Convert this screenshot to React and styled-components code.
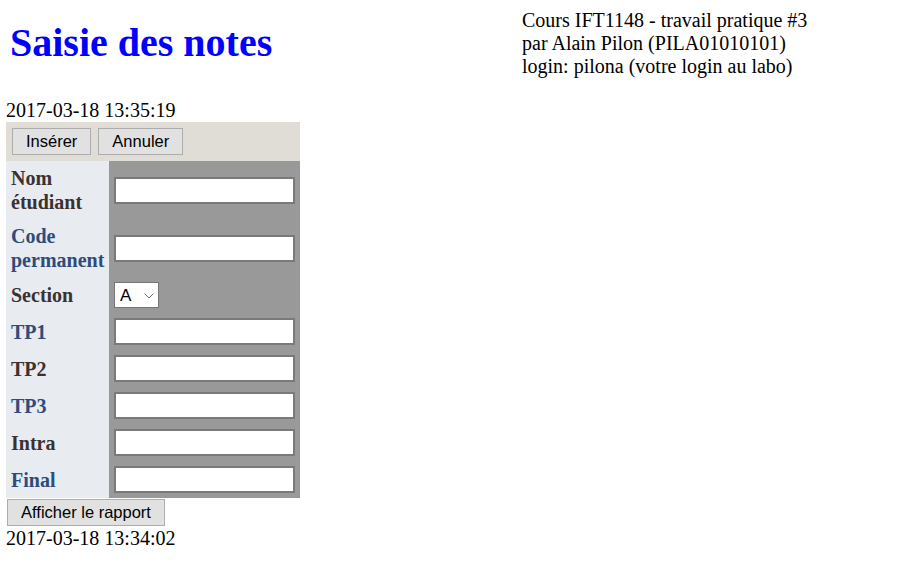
import React from "react";
import styled, { createGlobalStyle } from "styled-components";

const Global = createGlobalStyle`
  html, body { margin: 0; padding: 0; background: #ffffff; }
  body {
    font-family: "Liberation Serif", "Times New Roman", serif;
    font-size: 20px;
    color: #000000;
  }
  * { box-sizing: border-box; }
`;

const Page = styled.div`
  padding: 0 6px;
`;

const Header = styled.header`
  display: grid;
  grid-template-columns: 516px auto;
  height: 99px;
`;

const Title = styled.h1`
  margin: 20px 0 0 4px;
  font-size: 40px;
  line-height: 46px;
  font-weight: bold;
  color: #0000ff;
`;

const Info = styled.div`
  padding-top: 9px;
  line-height: 23px;
`;

const Stamp = styled.div`
  line-height: 23px;
  height: 23px;
  margin-top: ${(p) => (p.$gap ? "1px" : "0")};
`;

const Form = styled.form`
  display: grid;
  grid-template-columns: 103px 191px;
  width: 294px;
`;

const Toolbar = styled.div`
  grid-column: 1 / span 2;
  display: flex;
  gap: 7px;
  padding: 6px;
  background: #e0ddd6;
`;

const Button = styled.button`
  font-family: "Liberation Sans", Arial, sans-serif;
  font-size: 16.5px;
  height: 27px;
  padding: 0 13px;
  border: 1px solid #adadad;
  background: #e1e1e1;
  color: #000000;
  line-height: 25px;
  cursor: pointer;
`;

const Label = styled.label`
  display: flex;
  align-items: center;
  padding: 5px;
  background: #e8ebf0;
  font-weight: bold;
  line-height: 24px;
  color: ${(p) => (p.$alt ? "#2f4b7c" : "#3b3131")};
`;

const Field = styled.div`
  display: flex;
  align-items: center;
  padding: 5px;
  background: #999999;
`;

const TextInput = styled.input`
  width: 181px;
  height: 27px;
  border: 2px solid #7a7a7a;
  background: #ffffff;
  font-family: "Liberation Sans", Arial, sans-serif;
  font-size: 16px;
  padding: 1px 3px;
  outline: none;
`;

const SelectWrap = styled.div`
  position: relative;
  width: 45px;
  height: 26px;
`;

const Select = styled.select`
  appearance: none;
  -webkit-appearance: none;
  width: 45px;
  height: 26px;
  border: 1px solid #767676;
  border-radius: 0;
  background: #ffffff;
  font-family: "Liberation Sans", Arial, sans-serif;
  font-size: 17px;
  color: #000000;
  padding: 0 0 0 5px;
  outline: none;
`;

const Chevron = styled.svg`
  position: absolute;
  right: 5px;
  top: 11px;
  pointer-events: none;
`;

const Footer = styled.div`
  padding: 1px 0 0 1px;
`;

const rows = [
  { label: ["Nom", "étudiant"], name: "nom" },
  { label: ["Code", "permanent"], name: "code" },
  { label: ["Section"], name: "section", select: true },
  { label: ["TP1"], name: "tp1" },
  { label: ["TP2"], name: "tp2" },
  { label: ["TP3"], name: "tp3" },
  { label: ["Intra"], name: "intra" },
  { label: ["Final"], name: "final" },
];

export default function App() {
  return (
    <>
      <Global />
      <Page>
        <Header>
          <div>
            <Title>Saisie des notes</Title>
          </div>
          <Info>
            Cours IFT1148 - travail pratique #3
            <br />
            par Alain Pilon (PILA01010101)
            <br />
            login: pilona (votre login au labo)
          </Info>
        </Header>
        <Stamp>2017-03-18 13:35:19</Stamp>
        <Form onSubmit={(e) => e.preventDefault()}>
          <Toolbar>
            <Button type="button">Insérer</Button>
            <Button type="button">Annuler</Button>
          </Toolbar>
          {rows.map((r, i) => (
            <React.Fragment key={r.name}>
              <Label $alt={i % 2 === 1} htmlFor={r.name}>
                <span>
                  {r.label.map((l, j) => (
                    <React.Fragment key={l}>
                      {j > 0 && <br />}
                      {l}
                    </React.Fragment>
                  ))}
                </span>
              </Label>
              <Field>
                {r.select ? (
                  <SelectWrap>
                    <Select id={r.name} defaultValue="A">
                      <option value="A">A</option>
                      <option value="B">B</option>
                    </Select>
                    <Chevron width="10" height="6" viewBox="0 0 10 6">
                      <path d="M0.5 0.5 L5 5 L9.5 0.5" fill="none" stroke="#6d6d6d" strokeWidth="1" />
                    </Chevron>
                  </SelectWrap>
                ) : (
                  <TextInput id={r.name} type="text" />
                )}
              </Field>
            </React.Fragment>
          ))}
        </Form>
        <Footer>
          <Button type="button">Afficher le rapport</Button>
        </Footer>
        <Stamp $gap>2017-03-18 13:34:02</Stamp>
      </Page>
    </>
  );
}
